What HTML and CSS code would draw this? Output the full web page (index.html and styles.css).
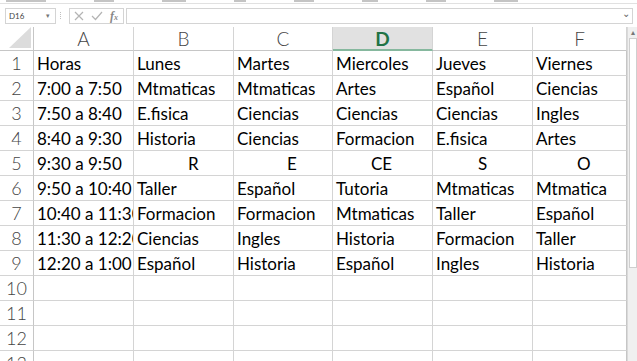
FILE: index.html
```html
<!DOCTYPE html>
<html lang="es">
  <head>
    <meta charset="UTF-8" />
    <title>Horario</title>
    <link rel="stylesheet" href="styles.css">
  </head>
  <body>
    <div class="ribbon">
      <i class="w40"></i><i class="w20"></i><i class="w24"></i><i class="w12"></i><i class="w20"></i><i class="w16"></i><i class="w20"></i><i class="w24"></i>
    </div>
    <div class="fbar">
      <div class="namebox">D16 <span class="caret">&#9662;</span></div>
      <div class="dots"></div>
      <div class="fx-tools">
        <svg width="10" height="10" viewBox="0 0 10 10"><path d="M1 1 L9 9 M9 1 L1 9" stroke="#b4b4b4" stroke-width="1.2" fill="none"/></svg>
        <svg width="12" height="10" viewBox="0 0 12 10"><path d="M1 5 L4.5 8.5 L11 1" stroke="#b4b4b4" stroke-width="1.2" fill="none"/></svg>
        <span class="fx">f<small>x</small></span>
      </div>
      <div class="input"><span class="caret">&#8964;</span></div>
    </div>
    <div class="sheet">
      <div class="grid">
        <div class="corner">
          <svg width="22" height="21" viewBox="0 0 22 21"><polygon points="22,0 22,21 0,21" fill="#dcdcdc"/></svg>
        </div>
        <div class="colhead">A</div>
        <div class="colhead">B</div>
        <div class="colhead">C</div>
        <div class="colhead sel">D</div>
        <div class="colhead">E</div>
        <div class="colhead">F</div>

        <div class="rowhead">1</div>
        <div class="cell">Horas</div><div class="cell">Lunes</div><div class="cell">Martes</div><div class="cell">Miercoles</div><div class="cell">Jueves</div><div class="cell">Viernes</div>

        <div class="rowhead">2</div>
        <div class="cell">7:00 a 7:50</div><div class="cell">Mtmaticas</div><div class="cell">Mtmaticas</div><div class="cell">Artes</div><div class="cell">Español</div><div class="cell">Ciencias</div>

        <div class="rowhead">3</div>
        <div class="cell">7:50 a 8:40</div><div class="cell">E.fisica</div><div class="cell">Ciencias</div><div class="cell">Ciencias</div><div class="cell">Ciencias</div><div class="cell">Ingles</div>

        <div class="rowhead">4</div>
        <div class="cell">8:40 a 9:30</div><div class="cell">Historia</div><div class="cell">Ciencias</div><div class="cell">Formacion</div><div class="cell">E.fisica</div><div class="cell">Artes</div>

        <div class="rowhead">5</div>
        <div class="cell">9:30 a 9:50</div><div class="cell brk-r">R</div><div class="cell brk-e">E</div><div class="cell brk-ce">CE</div><div class="cell brk-s">S</div><div class="cell brk-o">O</div>

        <div class="rowhead">6</div>
        <div class="cell">9:50 a 10:40</div><div class="cell">Taller</div><div class="cell">Español</div><div class="cell">Tutoria</div><div class="cell">Mtmaticas</div><div class="cell">Mtmatica</div>

        <div class="rowhead">7</div>
        <div class="cell">10:40 a 11:30</div><div class="cell">Formacion</div><div class="cell">Formacion</div><div class="cell">Mtmaticas</div><div class="cell">Taller</div><div class="cell">Español</div>

        <div class="rowhead">8</div>
        <div class="cell">11:30 a 12:20</div><div class="cell">Ciencias</div><div class="cell">Ingles</div><div class="cell">Historia</div><div class="cell">Formacion</div><div class="cell">Taller</div>

        <div class="rowhead">9</div>
        <div class="cell">12:20 a 1:00</div><div class="cell">Español</div><div class="cell">Historia</div><div class="cell">Español</div><div class="cell">Ingles</div><div class="cell">Historia</div>

        <div class="rowhead">10</div>
        <div class="cell"></div><div class="cell"></div><div class="cell"></div><div class="cell"></div><div class="cell"></div><div class="cell"></div>

        <div class="rowhead">11</div>
        <div class="cell"></div><div class="cell"></div><div class="cell"></div><div class="cell"></div><div class="cell"></div><div class="cell"></div>

        <div class="rowhead">12</div>
        <div class="cell"></div><div class="cell"></div><div class="cell"></div><div class="cell"></div><div class="cell"></div><div class="cell"></div>

        <div class="rowhead">13</div>
        <div class="cell"></div><div class="cell"></div><div class="cell"></div><div class="cell"></div><div class="cell"></div><div class="cell"></div>
      </div>
      <div class="vscroll">
        <div class="arrow">&#9652;</div>
        <div class="thumb"></div>
      </div>
    </div>
  </body>
</html>
```

FILE: styles.css
```css
* {
  box-sizing: border-box;
  margin: 0;
  padding: 0;
}
body {
  width: 637px;
  height: 361px;
  overflow: hidden;
  background: #fff;
  font-family: Lato, "Open Sans", sans-serif;
  color: #000;
}
.ribbon {
  height: 4px;
  border-bottom: 1px solid #e1e1e1;
  display: flex;
  align-items: flex-start;
  gap: 48px;
  padding-left: 6px;
}
.ribbon i {
  height: 2px;
  background: #c4c4c4;
}
.w40 { width: 40px; }
.w24 { width: 24px; }
.w20 { width: 20px; }
.w16 { width: 16px; }
.w12 { width: 12px; }
.fbar {
  height: 23px;
  display: flex;
  align-items: flex-start;
  padding: 4px 4px 0 5px;
}
.namebox {
  width: 51px;
  height: 16px;
  border: 1px solid #d4d4d4;
  font-size: 8px;
  color: #444;
  padding: 2px 0 0 3px;
  display: flex;
  justify-content: space-between;
}
.namebox .caret {
  color: #777;
  font-size: 7px;
  padding-right: 5px;
}
.dots {
  width: 1px;
  height: 7px;
  margin: 4px 8px 0 4px;
  border-left: 1px dotted #c0c0c0;
}
.fx-tools {
  width: 55px;
  height: 16px;
  border: 1px solid #d4d4d4;
  display: flex;
  align-items: center;
  gap: 7px;
  padding-left: 4px;
}
.fx {
  font-family: "Liberation Serif", serif;
  font-style: italic;
  font-size: 12px;
  color: #888;
  font-weight: bold;
}
.fx small {
  font-size: 8px;
}
.input {
  flex: 1;
  height: 16px;
  margin-left: 2px;
  border: 1px solid #d4d4d4;
  display: flex;
  justify-content: flex-end;
}
.input .caret {
  font-size: 10px;
  color: #666;
  line-height: 8px;
  padding-right: 2px;
}
.sheet {
  display: flex;
}
.grid {
  width: 627px;
  display: grid;
  grid-template-columns: 34px 100px 100px 99px 100px 100px 94px;
  grid-template-rows: 24px;
  grid-auto-rows: 25px;
}
.corner {
  border-right: 1px solid #c6c6c6;
  border-bottom: 1px solid #c6c6c6;
  display: flex;
  justify-content: flex-end;
  align-items: flex-end;
  padding: 0 2px 2px 0;
}
.colhead {
  border-right: 1px solid #d4d4d4;
  border-bottom: 1px solid #c6c6c6;
  text-align: center;
  font-weight: 300;
  font-size: 19px;
  line-height: 24px;
  color: #444;
}
.colhead.sel {
  background: #e1e1e1;
  border-bottom: 2px solid #86b89e;
  color: #217346;
  font-weight: 700;
}
.rowhead {
  border-right: 1px solid #c6c6c6;
  border-bottom: 1px solid #d4d4d4;
  text-align: center;
  font-weight: 300;
  font-size: 18px;
  line-height: 25px;
  color: #444;
}
.cell {
  border-right: 1px solid #d4d4d4;
  border-bottom: 1px solid #d4d4d4;
  font-size: 17px;
  line-height: 25px;
  padding-left: 3px;
  white-space: nowrap;
  overflow: hidden;
}
.cell:nth-child(7n) {
  border-right-color: #c6c6c6;
}
.brk-r {
  padding-left: 54px;
}
.brk-e {
  padding-left: 53px;
}
.brk-ce {
  padding-left: 38px;
}
.brk-s {
  padding-left: 45px;
}
.brk-o {
  padding-left: 44px;
}
.vscroll {
  width: 10px;
  height: 334px;
  background: #f0f0f0;
  border-left: 1px solid #dadada;
  display: flex;
  flex-direction: column;
  align-items: center;
}
.arrow {
  font-size: 8px;
  line-height: 8px;
  color: #777;
  margin-top: 1px;
}
.thumb {
  width: 8px;
  height: 230px;
  margin-top: 2px;
  background: #fff;
  border: 1px solid #cfcfcf;
}
```
